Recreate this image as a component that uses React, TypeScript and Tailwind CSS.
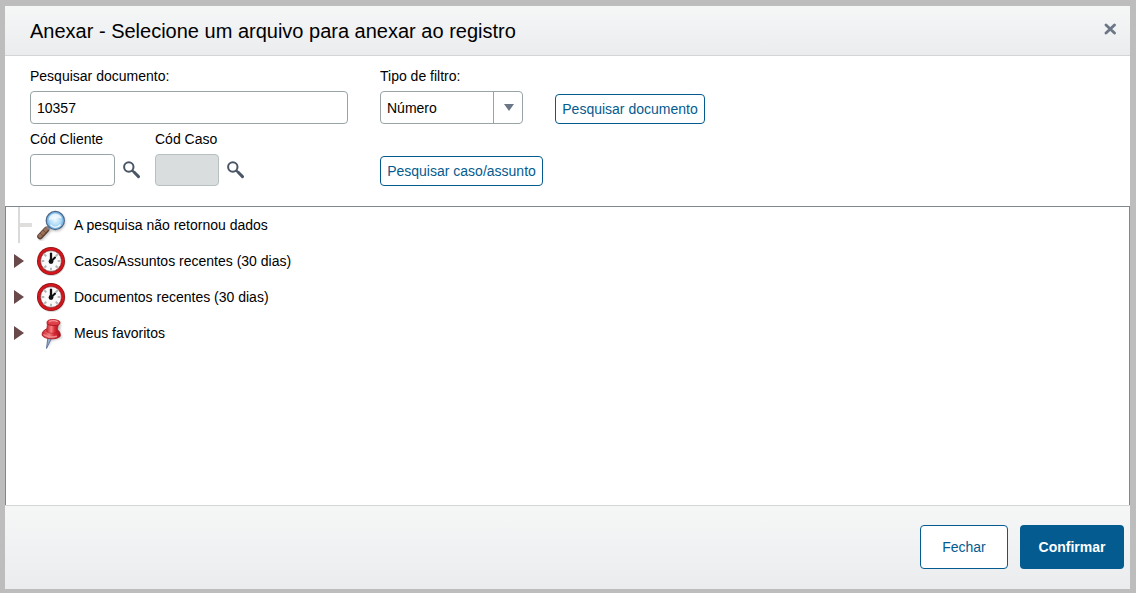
import { useState } from 'react'
import type { ReactNode } from 'react'

const FIELD = 'rounded border border-[#98a4a6] bg-white text-sm text-black outline-none focus:border-[#045b8f]'
const OUTLINE_BTN = 'rounded border border-[#045b8f] bg-white text-sm text-[#045b8f] hover:bg-[#eef5f9]'

function SearchGlyph() {
  return (
    <svg viewBox="0 0 18 18" className="h-[18px] w-[18px]" fill="none" stroke="#4a5666" aria-hidden="true">
      <circle cx="5.8" cy="6" r="4.7" strokeWidth="2" />
      <path d="M9 9.300l2.500 2.200" strokeWidth="2.200" />
      <path d="M11.200 11.300l4.300 4.300" strokeWidth="3" strokeLinecap="round" />
    </svg>
  )
}

function CloseGlyph() {
  return (
    <svg viewBox="0 0 12 12" className="h-3 w-3" fill="none" stroke="#6b7686" aria-hidden="true">
      <path d="M2 2l8.500 8M10.500 2L2 10" strokeWidth="2.800" strokeLinecap="round" />
    </svg>
  )
}

function MagnifierIcon() {
  return (
    <svg viewBox="0 0 32 32" className="h-8 w-8" aria-hidden="true">
      <defs>
        <radialGradient id="lens" cx="0.5" cy="0.45" r="0.6">
          <stop offset="0" stopColor="#eefaff" />
          <stop offset="0.5" stopColor="#b4ddf6" />
          <stop offset="1" stopColor="#5a9fd8" />
        </radialGradient>
        <filter id="soft" x="-30%" y="-30%" width="160%" height="160%">
          <feGaussianBlur stdDeviation="1.1" />
        </filter>
      </defs>
      <g filter="url(#soft)" opacity="0.35">
        <circle cx="21" cy="13" r="9.5" fill="#666" />
        <path d="M14 21L6 29" stroke="#555" strokeWidth="5" strokeLinecap="round" />
      </g>
      <path d="M11.500 20.500L5 27.500" stroke="#5b3d31" strokeWidth="5.600" strokeLinecap="round" />
      <path d="M11.500 20L5 27" stroke="#9a7059" strokeWidth="3.600" strokeLinecap="round" />
      <path d="M5 24l3 3M8 21l3 3" stroke="#6b4738" strokeWidth="0.800" />
      <path d="M12 17.500l2.500 2.500" stroke="#7b8594" strokeWidth="2.500" />
      <circle cx="20.300" cy="11.500" r="9" fill="url(#lens)" stroke="#4d6787" strokeWidth="1.400" />
      <circle cx="20.300" cy="11.500" r="7.900" fill="none" stroke="#78b5e6" strokeWidth="1" />
      <path d="M14 11c0-5 5-7.500 9.500-5.500 2 1 3 2 3 4-4.500-1.500-8 2-12.500 1.500z" fill="#fff" opacity="0.650" />
      <path d="M15.500 15.500c2 3.500 7.500 3.500 10 0" fill="none" stroke="#e4f6ff" strokeWidth="1.500" />
    </svg>
  )
}

function ClockIcon() {
  return (
    <svg viewBox="0 0 32 32" className="h-8 w-8" aria-hidden="true">
      <circle cx="16.600" cy="17.200" r="13.800" fill="#777" opacity="0.300" />
      <circle cx="16" cy="16" r="14" fill="#8a1214" />
      <circle cx="16" cy="16" r="12.200" fill="none" stroke="#d5151b" strokeWidth="2.200" />
      <circle cx="16" cy="16" r="10.500" fill="#fafafa" stroke="#9b3a3c" strokeWidth="0.800" />
      <g stroke="#b3b6b8" strokeWidth="1.900">
        {[0, 45, 90, 135, 180, 225, 270, 315].map((deg) => (
          <path key={deg} d="M16 6.500v2.800" transform={`rotate(${deg} 16 16)`} />
        ))}
      </g>
      <path d="M16 16.500V8" stroke="#111" strokeWidth="2.300" />
      <path d="M16 16.500l4-4" stroke="#111" strokeWidth="2" strokeLinecap="round" />
      <circle cx="16" cy="16.500" r="2.400" fill="#111" />
    </svg>
  )
}

function PinIcon() {
  return (
    <svg viewBox="0 0 32 32" className="h-8 w-8" aria-hidden="true">
      <defs>
        <linearGradient id="pin" x1="0" x2="1">
          <stop offset="0" stopColor="#c91f2a" />
          <stop offset="0.4" stopColor="#f28184" />
          <stop offset="0.65" stopColor="#dd303a" />
          <stop offset="1" stopColor="#a80f1c" />
        </linearGradient>
        <filter id="pinSoft" x="-30%" y="-30%" width="160%" height="160%">
          <feGaussianBlur stdDeviation="1" />
        </filter>
      </defs>
      <path d="M14 6l12-1-1 10 2 6-11 3-3 7z" fill="#555" opacity="0.350" filter="url(#pinSoft)" />
      <path d="M13 20l-1.500 11.500L16.500 21z" fill="#9db2d0" stroke="#60799e" strokeWidth="1" />
      <path
        d="M11.500 12c-3 1-4.800 4-4.300 6.500 3 4 14.500 4.500 18 .8.500-3-1-5.800-3.500-6.800z"
        fill="url(#pin)"
        stroke="#a8141e"
        strokeWidth="0.900"
      />
      <path d="M12.500 5.500l-1 9c2 2 8.500 2.500 10.500.5l1.500-9z" fill="url(#pin)" stroke="#b51a24" strokeWidth="0.600" />
      <path
        d="M12.500 4c2-2 9.500-1.800 12 .3.700 1 .3 2.700-.6 3.400-2.500 1.300-9 1-11.400-.4-.6-.8-.5-2.500 0-3.300z"
        fill="#e04048"
        stroke="#a8141e"
        strokeWidth="0.900"
      />
      <path d="M14 4.500c2.500-1 6.500-.9 8.500.2" fill="none" stroke="#f29598" strokeWidth="1.400" />
      <path d="M8.500 17.500c3 2.500 9 3 13.500 1.800" fill="none" stroke="#f28a8d" strokeWidth="1.400" />
    </svg>
  )
}

interface TreeItem {
  label: string
  icon: ReactNode
  leaf?: boolean
}

const ITEMS: TreeItem[] = [
  { label: 'A pesquisa não retornou dados', icon: <MagnifierIcon />, leaf: true },
  { label: 'Casos/Assuntos recentes (30 dias)', icon: <ClockIcon /> },
  { label: 'Documentos recentes (30 dias)', icon: <ClockIcon /> },
  { label: 'Meus favoritos', icon: <PinIcon /> },
]

function TreeRow({ item }: { item: TreeItem }) {
  return (
    <li className="flex h-9 items-center">
      {item.leaf ? (
        <span className="flex h-9 w-[29px] items-center pl-3">
          <span className="h-full w-0.5 bg-[#dcdad8]" />
          <span className="h-1 w-3 bg-[#e0dedc]" />
        </span>
      ) : (
        <button type="button" aria-label={`Expandir ${item.label}`} className="flex w-[29px] pl-2">
          <svg viewBox="0 0 10 16" className="h-4 w-2.5" aria-hidden="true">
            <path d="M0 1l10 7-10 7z" fill="#69494a" />
          </svg>
        </button>
      )}
      {item.icon}
      <span className="ml-[7px] text-sm">{item.label}</span>
    </li>
  )
}

export default function App() {
  const [documento, setDocumento] = useState('10357')
  const [filtro, setFiltro] = useState('numero')
  const [cliente, setCliente] = useState('')

  return (
    <div className="flex min-h-screen bg-[#bdbdbd] pt-1.5 pr-1.5 pb-1 pl-[5px] font-['Liberation_Sans',Arial,sans-serif] text-black">
      <div role="dialog" aria-labelledby="titulo" className="flex flex-1 flex-col bg-white">
        {/* Cabeçalho */}
        <header className="flex h-[50px] items-center justify-between border-b border-[#d3d5d6] bg-linear-to-b from-[#f5f7f7] to-[#ebecee] pr-3 pl-[25px]">
          <h1 id="titulo" className="text-xl">Anexar - Selecione um arquivo para anexar ao registro</h1>
          <button type="button" aria-label="Fechar janela" className="p-0.5 pb-1.5">
            <CloseGlyph />
          </button>
        </header>

        {/* Filtros */}
        <form
          onSubmit={(e) => e.preventDefault()}
          className="grid grid-cols-[318px_143px_150px] items-end gap-x-8 gap-y-[5px] px-[25px] pt-2.5 pb-5"
        >
          <div className="flex flex-col gap-[5px]">
            <label htmlFor="documento" className="text-sm">Pesquisar documento:</label>
            <input
              id="documento"
              value={documento}
              onChange={(e) => setDocumento(e.target.value)}
              className={`${FIELD} h-[33px] px-1.5`}
            />
          </div>
          <div className="flex flex-col gap-[5px]">
            <label htmlFor="filtro" className="text-sm">Tipo de filtro:</label>
            <div className="relative">
              <select
                id="filtro"
                value={filtro}
                onChange={(e) => setFiltro(e.target.value)}
                className={`${FIELD} block h-[33px] w-full appearance-none pr-8 pl-1.5`}
              >
                <option value="numero">Número</option>
                <option value="nome">Nome</option>
              </select>
              <span className="pointer-events-none absolute inset-y-0 right-0 flex w-[30px] items-center justify-center border-l border-[#98a4a6]">
                <svg viewBox="0 0 10 7" className="h-[7px] w-2.5" aria-hidden="true">
                  <path d="M0 0h10L5 7z" fill="#6b7686" />
                </svg>
              </span>
            </div>
          </div>
          <button type="submit" className={`${OUTLINE_BTN} h-[30px]`}>Pesquisar documento</button>

          <div className="flex">
            <div className="flex w-[125px] flex-col gap-[5px]">
              <label htmlFor="cliente" className="text-sm">Cód Cliente</label>
              <div className="flex items-center gap-2">
                <input
                  id="cliente"
                  value={cliente}
                  onChange={(e) => setCliente(e.target.value)}
                  className={`${FIELD} h-8 w-[85px] px-1.5`}
                />
                <button type="button" aria-label="Buscar cliente"><SearchGlyph /></button>
              </div>
            </div>
            <div className="flex flex-col gap-[5px]">
              <label htmlFor="caso" className="text-sm">Cód Caso</label>
              <div className="flex items-center gap-2">
                <input id="caso" disabled className="h-8 w-16 rounded border border-[#b7bfc0] bg-[#d9dddd] px-1.5 text-sm" />
                <button type="button" aria-label="Buscar caso"><SearchGlyph /></button>
              </div>
            </div>
          </div>
          <button type="button" className={`${OUTLINE_BTN} col-span-2 h-[30px] w-[163px]`}>Pesquisar caso/assunto</button>
        </form>

        {/* Resultados */}
        <ul className="flex-1 border-x border-t border-[#7f888d] bg-white">
          {ITEMS.map((item) => (
            <TreeRow key={item.label} item={item} />
          ))}
        </ul>

        {/* Rodapé */}
        <footer className="flex justify-end gap-3 border-t border-[#d3d5d6] bg-linear-to-b from-[#f5f7f7] to-[#ebecee] pt-[19px] pr-1.5 pb-5">
          <button type="button" className={`${OUTLINE_BTN} h-11 w-[88px]`}>Fechar</button>
          <button type="button" className="h-11 w-[104px] rounded bg-[#045b8f] text-sm font-bold text-white hover:bg-[#034b77]">
            Confirmar
          </button>
        </footer>
      </div>
    </div>
  )
}
